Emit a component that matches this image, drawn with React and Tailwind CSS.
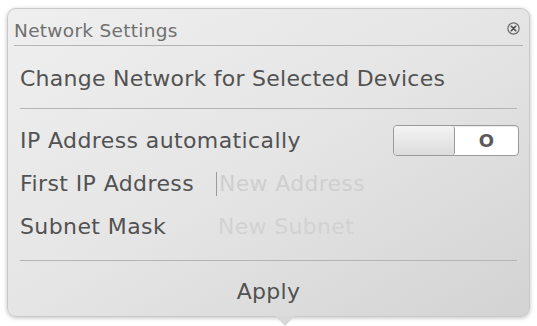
import React, { useState } from "react";

const CloseIcon = () => (
  <svg width="13" height="13" viewBox="0 0 13 13">
    <circle cx="6.5" cy="6.5" r="5.6" fill="none" stroke="#6a6a6a" strokeWidth="1.2" />
    <path d="M4.3 4.3 L8.7 8.7 M8.7 4.3 L4.3 8.7" stroke="#4a4a4a" strokeWidth="1.6" strokeLinecap="round" />
  </svg>
);

const App = () => {
  const [auto, setAuto] = useState(false);

  return (
    <div className="w-[537px] h-[326px] bg-white pt-[8px] px-[7px] overflow-hidden font-['DejaVu_Sans',sans-serif]">
      <div className="relative w-[523px] h-[309px] rounded-[9px] border border-[#c9c9c9] bg-gradient-to-br from-[#efefef] via-[#e5e5e5] to-[#d3d3d3] shadow-[0_1px_4px_rgba(0,0,0,0.25)] flex flex-col">
        <div className="flex items-center justify-between mx-[6px] h-[37px] pt-[8px] border-b border-[#b4b4b4]">
          <span className="text-[18.5px] tracking-[0.3px] text-[#707070]">Network Settings</span>
          <span className="mr-[3px] mb-[6px]">
            <CloseIcon />
          </span>
        </div>

        <div className="mx-[12px] h-[63px] flex items-center pt-[2px] border-b border-[#b4b4b4] text-[22px] tracking-[0.25px] text-[#525252]">
          Change Network for Selected Devices
        </div>

        <div className="mx-[12px] pt-[9px] pb-[12px] flex flex-col text-[22px] tracking-[0.4px] text-[#525252] border-b border-[#b4b4b4]">
          <div className="flex items-center justify-between h-[44px]">
            <span>IP Address automatically</span>
            <button
              onClick={() => setAuto(!auto)}
              className="flex h-[31px] w-[126px] mr-[-2px] rounded-[4px] border border-[#9a9a9a] bg-white overflow-hidden shadow-[inset_0_1px_1px_rgba(0,0,0,0.08)]"
            >
              <span className="w-[61px] h-full rounded-[3px] border-r border-[#9a9a9a] bg-gradient-to-b from-[#f4f4f4] to-[#dcdcdc]" />
              <span className="flex-1 flex items-center justify-center text-[18px] font-bold text-[#5a5a5a]">
                {auto ? "I" : "O"}
              </span>
            </button>
          </div>
          <div className="flex items-center h-[43px]">
            <span className="w-[196px]">First IP Address</span>
            <span className="w-px h-[24px] bg-[#9a9a9a] mr-[2px]" />
            <span className="text-[#cfcfcf] tracking-[0.3px]">New Address</span>
          </div>
          <div className="flex items-center h-[43px]">
            <span className="w-[198px]">Subnet Mask</span>
            <span className="text-[#d2d2d2] tracking-[0.3px]">New Subnet</span>
          </div>
        </div>

        <div className="flex-1 flex items-center justify-center pt-[6px] text-[22px] tracking-[0.3px] text-[#525252]">
          Apply
        </div>

        <div className="absolute left-[267px] bottom-[-10px] w-0 h-0 border-l-[10px] border-r-[10px] border-t-[10px] border-l-transparent border-r-transparent border-t-[#d8d8d8]" />
      </div>
    </div>
  );
};

export default App;
